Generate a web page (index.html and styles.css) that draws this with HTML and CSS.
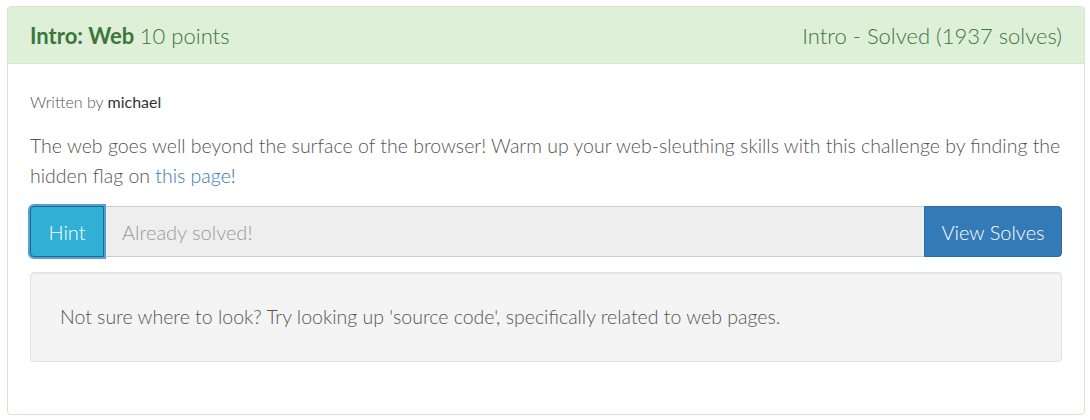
FILE: index.html
```html
<!DOCTYPE html>
<html>
<head>
<meta charset="utf-8">
<link rel="stylesheet" href="styles.css">
</head>
<body>
<div class="panel">
  <div class="panel-heading">
    <div class="title"><span class="name">Intro: Web</span> <span class="points">10 points</span></div>
    <div class="status">Intro - Solved (1937 solves)</div>
  </div>
  <div class="panel-body">
    <p class="author">Written by <span class="who">michael</span></p>
    <p class="desc">The web goes well beyond the surface of the browser! Warm up your web-sleuthing skills with this challenge by finding the hidden flag on <a href="#">this page</a>!</p>
    <div class="input-group">
      <button class="btn btn-hint">Hint</button>
      <input class="field" type="text" placeholder="Already solved!" disabled>
      <button class="btn btn-solves">View Solves</button>
    </div>
    <div class="well">Not sure where to look? Try looking up 'source code', specifically related to web pages.</div>
  </div>
</div>
</body>
</html>
```
FILE: styles.css
```css
* { box-sizing: border-box; }
body {
  margin: 0;
  padding: 6px 6px 0 7px;
  background: #fff;
  font-family: Lato, "Open Sans", sans-serif;
  color: #555;
}
.panel {
  width: 1078px;
  height: 409px;
  border: 1px solid #d6e9c6;
  border-radius: 4px;
  background: #fff;
}
.panel-heading {
  height: 57px;
  background: #dff0d8;
  border-bottom: 1px solid #d6e9c6;
  border-radius: 3px 3px 0 0;
  color: #3c763d;
  display: flex;
  align-items: center;
  justify-content: space-between;
  padding: 0 22px 0 22px;
  font-size: 22px;
}
.name { font-weight: 700; }
.points, .status { font-weight: 300; }
.panel-body { padding: 28px 22px 0 22px; }
.author { margin: 0 0 20px; font-size: 16px; font-weight: 300; color: #555; }
.who { font-weight: 400; color: #333; }
.desc { margin: 0 0 15px; font-size: 19.5px; line-height: 30px; font-weight: 300; color: #555; }
.desc a { color: #337ab7; text-decoration: none; }
.input-group { display: flex; height: 51px; }
.btn {
  font-family: inherit;
  font-size: 20px;
  font-weight: 300;
  color: #fff;
  border: 1px solid transparent;
  cursor: pointer;
}
.btn-hint {
  width: 74px;
  background: #31b0d5;
  border: 1px solid #1b6d85;
  border-radius: 4px 0 0 4px;
  box-shadow: 0 0 0 2px #5b9dd9;
  position: relative;
  z-index: 1;
}
.field {
  flex: 1;
  min-width: 0;
  background: #eee;
  border: 1px solid #ccc;
  border-left: 0;
  border-right: 0;
  padding: 0 18px;
  font-family: inherit;
  font-size: 20px;
  font-weight: 300;
  color: #555;
}
.field::placeholder { color: #999; }
.btn-solves {
  width: 138px;
  background: #337ab7;
  border: 1px solid #2e6da4;
  border-radius: 0 4px 4px 0;
}
.well {
  margin-top: 15px;
  height: 90px;
  background: #f4f4f4;
  border: 1px solid #e3e3e3;
  border-radius: 4px;
  box-shadow: inset 0 1px 1px rgba(0,0,0,.05);
  padding: 0 29px 2px;
  display: flex;
  align-items: center;
  font-size: 19.5px;
  font-weight: 300;
  color: #555;
}
```
